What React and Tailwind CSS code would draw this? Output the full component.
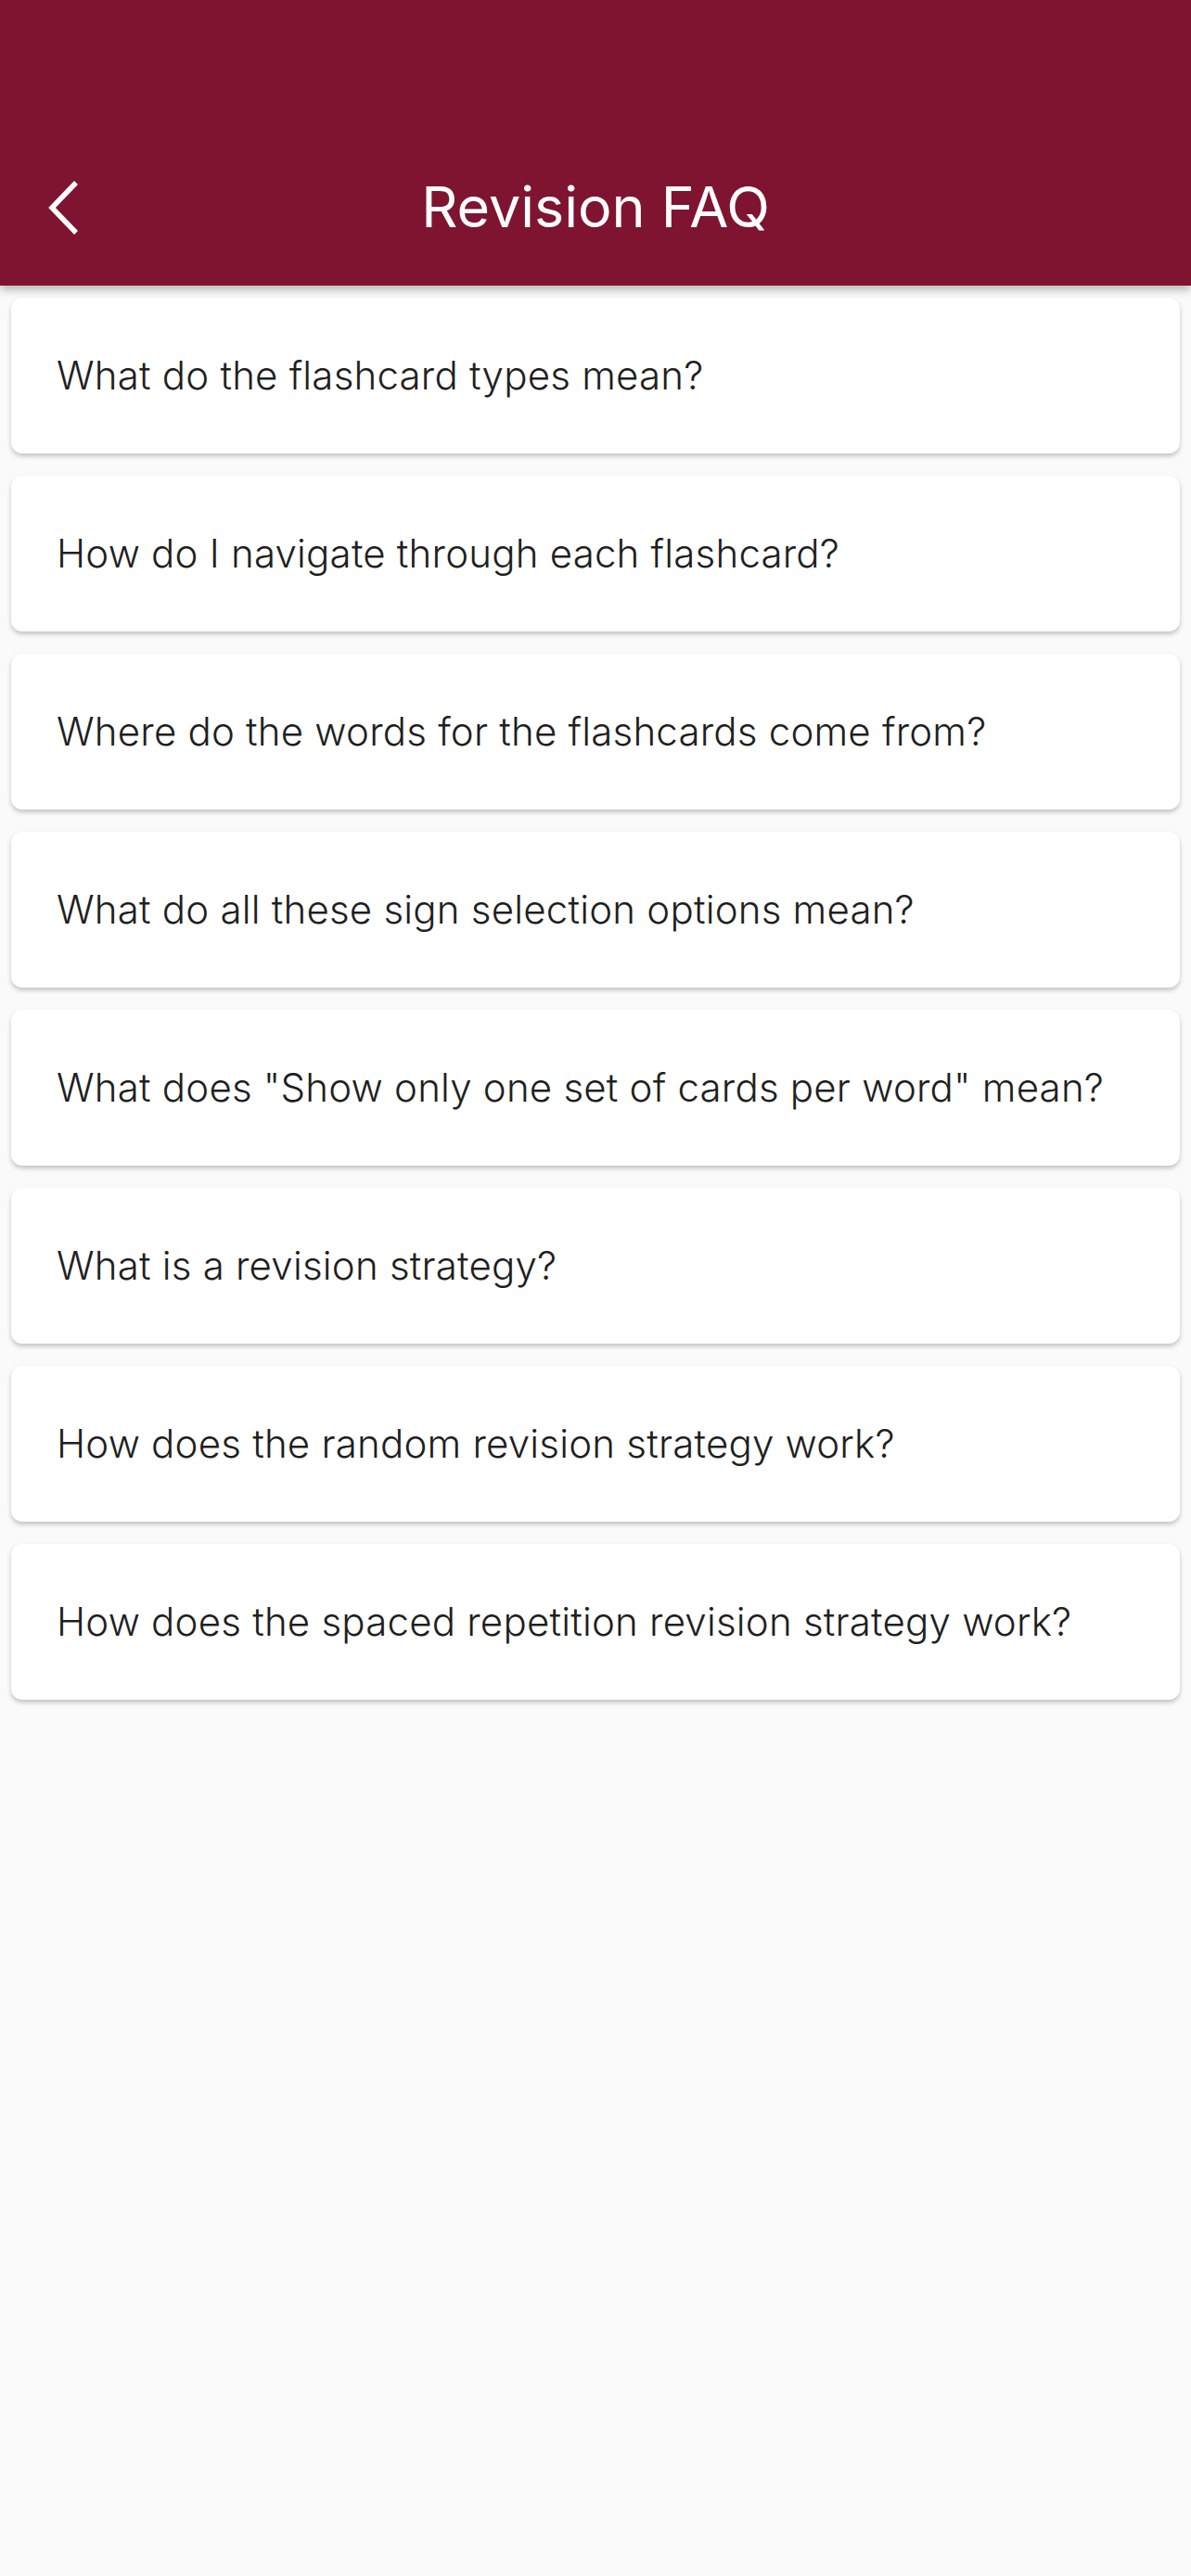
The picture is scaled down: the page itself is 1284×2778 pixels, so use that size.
const questions = [
  'What do the flashcard types mean?',
  'How do I navigate through each flashcard?',
  'Where do the words for the flashcards come from?',
  'What do all these sign selection options mean?',
  'What does "Show only one set of cards per word" mean?',
  'What is a revision strategy?',
  'How does the random revision strategy work?',
  'How does the spaced repetition revision strategy work?',
]

export default function App() {
  return (
    <div className="min-h-[2778px] bg-[#fafafa]" style={{ fontFamily: 'Inter, "Noto Sans", sans-serif' }}>
      {/* App bar */}
      <header className="relative z-10 bg-[#7f1431] pt-[140px] shadow-[0_4px_10px_rgba(0,0,0,0.3)]">
        <div className="relative flex h-[168px] items-center justify-center">
          <button className="absolute left-[44px] top-1/2 -translate-y-1/2 p-1">
            <svg width="40" height="62" viewBox="0 0 40 62" fill="none">
              <polyline points="34,4 8,31 34,58" stroke="white" strokeWidth="5.5" strokeLinecap="butt" strokeLinejoin="miter" />
            </svg>
          </button>
          <h1 className="text-[61px] font-normal tracking-normal text-white">Revision FAQ</h1>
        </div>
      </header>

      {/* Questions */}
      <main className="flex flex-col gap-[24px] px-[12px] pt-[13px]">
        {questions.map((q) => (
          <div
            key={q}
            className="flex h-[168px] items-center rounded-[12px] bg-white px-[49px] shadow-[0_3px_5px_rgba(0,0,0,0.22)]"
          >
            <span className="-mt-[2px] text-[42px] font-light tracking-[0.005em] text-[#1f1f1f]">{q}</span>
          </div>
        ))}
      </main>
    </div>
  )
}
